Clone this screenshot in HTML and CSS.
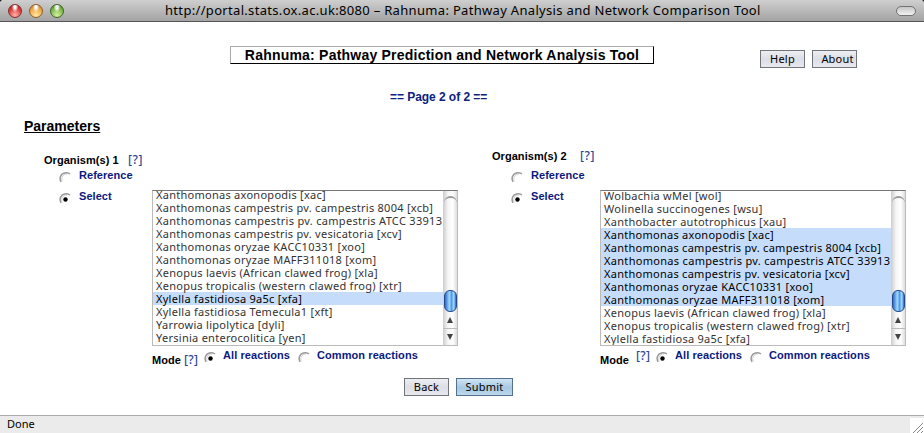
FILE: index.html
```
<!DOCTYPE html>
<html lang="en">
<head>
<meta charset="utf-8">
<title>Rahnuma: Pathway Analysis and Network Comparison Tool</title>
<link rel="stylesheet" href="styles.css">
</head>
<body>
<svg class="defs" width="0" height="0">
  <symbol id="radio" viewBox="0 0 12 12"><path d="M2 10.800C-.1 6.800 1.800 3 5.500 2c2.200-.6 4.200-.2 5.400 1" fill="none" stroke="#999" stroke-width="1.500"/><path d="M3.200 10.500C1.700 6.500 4.200 2.900 8 3.100" fill="none" stroke="#bbb" stroke-width=".7"/></symbol>
  <symbol id="radio-on" viewBox="0 0 12 12"><use href="#radio"/><circle cx="6.500" cy="7.500" r="2.200" fill="#000"/></symbol>
</svg>
<header class="titlebar">
  <div class="lights"><i class="light red"></i><i class="light amber"></i><i class="light green"></i></div>
  <div class="window-title">http://portal.stats.ox.ac.uk:8080 – Rahnuma: Pathway Analysis and Network Comparison Tool</div>
  <i class="pill"></i>
</header>
<main>
  <div class="top">
    <h1>Rahnuma: Pathway Prediction and Network Analysis Tool</h1>
    <button class="btn help">Help</button>
    <button class="btn about">About</button>
  </div>
  <p class="page">== Page 2 of 2 ==</p>
  <h2>Parameters</h2>
  <div class="groups">
    <section class="group first">
      <div class="heading"><b>Organism(s) 1</b><a>[?]</a></div>
      <div class="choices">
        <div class="options">
          <label class="opt"><svg class="radio"><use href="#radio"/></svg><span>Reference</span></label>
          <label class="opt"><svg class="radio"><use href="#radio-on"/></svg><span>Select</span></label>
        </div>
        <div class="listbox">
          <ul>
            <li>Xanthomonas axonopodis [xac]</li>
            <li>Xanthomonas campestris pv. campestris 8004 [xcb]</li>
            <li class="long">Xanthomonas campestris pv. campestris ATCC 33913</li>
            <li>Xanthomonas campestris pv. vesicatoria [xcv]</li>
            <li>Xanthomonas oryzae KACC10331 [xoo]</li>
            <li>Xanthomonas oryzae MAFF311018 [xom]</li>
            <li>Xenopus laevis (African clawed frog) [xla]</li>
            <li>Xenopus tropicalis (western clawed frog) [xtr]</li>
            <li class="sel">Xylella fastidiosa 9a5c [xfa]</li>
            <li>Xylella fastidiosa Temecula1 [xft]</li>
            <li>Yarrowia lipolytica [dyli]</li>
            <li>Yersinia enterocolitica [yen]</li>
          </ul>
          <div class="scroll"><i class="cap"></i><i class="thumb"></i><i class="arrow up"></i><i class="arrow down"></i></div>
        </div>
      </div>
      <div class="mode"><b>Mode</b><a>[?]</a><svg class="radio"><use href="#radio-on"/></svg><span class="all">All reactions</span><svg class="radio"><use href="#radio"/></svg><span>Common reactions</span></div>
    </section>
    <section class="group second">
      <div class="heading"><b>Organism(s) 2</b><a>[?]</a></div>
      <div class="choices">
        <div class="options">
          <label class="opt"><svg class="radio"><use href="#radio"/></svg><span>Reference</span></label>
          <label class="opt"><svg class="radio"><use href="#radio-on"/></svg><span>Select</span></label>
        </div>
        <div class="listbox">
          <ul>
            <li>Wolbachia wMel [wol]</li>
            <li>Wolinella succinogenes [wsu]</li>
            <li>Xanthobacter autotrophicus [xau]</li>
            <li class="sel">Xanthomonas axonopodis [xac]</li>
            <li class="sel">Xanthomonas campestris pv. campestris 8004 [xcb]</li>
            <li class="sel long">Xanthomonas campestris pv. campestris ATCC 33913</li>
            <li class="sel">Xanthomonas campestris pv. vesicatoria [xcv]</li>
            <li class="sel">Xanthomonas oryzae KACC10331 [xoo]</li>
            <li class="sel">Xanthomonas oryzae MAFF311018 [xom]</li>
            <li>Xenopus laevis (African clawed frog) [xla]</li>
            <li>Xenopus tropicalis (western clawed frog) [xtr]</li>
            <li>Xylella fastidiosa 9a5c [xfa]</li>
          </ul>
          <div class="scroll"><i class="cap"></i><i class="thumb"></i><i class="arrow up"></i><i class="arrow down"></i></div>
        </div>
      </div>
      <div class="mode"><b>Mode</b><a>[?]</a><svg class="radio"><use href="#radio-on"/></svg><span class="all">All reactions</span><svg class="radio"><use href="#radio"/></svg><span>Common reactions</span></div>
    </section>
  </div>
  <div class="actions"><button class="btn back">Back</button><button class="btn submit">Submit</button></div>
</main>
<footer><span>Done</span><svg class="grip" viewBox="0 0 14 15"><path d="M3 15 13 5M7 15l6-6M11 15l2-2" stroke="#888" fill="none"/></svg></footer>
</body>
</html>
```
FILE: styles.css
```
* { box-sizing: border-box; }
body {
  margin: 0;
  width: 924px;
  height: 433px;
  overflow: hidden;
  display: flex;
  flex-direction: column;
  background: #fff;
  color: #000;
  font-family: "Liberation Sans", sans-serif;
  font-size: 11px;
}
i { display: block; }
.defs { position: absolute; }

.titlebar {
  flex: none;
  height: 22px;
  display: flex;
  align-items: center;
  padding: 0 8px;
  background: linear-gradient(#cfcfcf, #a3a3a3);
  border-bottom: 1px solid #555;
  border-radius: 4px 4px 0 0;
  box-shadow: 0 -6px 0 6px #222;
}
.lights { display: flex; gap: 7px; width: 157px; }
.light {
  width: 14px;
  height: 14px;
  border-radius: 50%;
  border: 1px solid;
}
.red { background: radial-gradient(ellipse at 50% 15%, #fff 0 12%, transparent 38%), radial-gradient(circle at 50% 85%, #ffb4ac, #d83a38 60%, #9c2421); border-color: #83302d; }
.amber { background: radial-gradient(ellipse at 50% 15%, #fff 0 12%, transparent 38%), radial-gradient(circle at 50% 85%, #ffe9a2, #eda744 60%, #a96a22); border-color: #8d5e2c; }
.green { background: radial-gradient(ellipse at 50% 15%, #fff 0 12%, transparent 38%), radial-gradient(circle at 50% 85%, #d2f2a0, #7ab646 60%, #41762a); border-color: #3e6429; }
.window-title {
  flex: 1;
  font: 13px/19px "Noto Sans", sans-serif;
  letter-spacing: .32px;
  margin-top: -1px;
  white-space: nowrap;
}
.pill {
  width: 20px;
  height: 10px;
  border: 1px solid #737373;
  border-radius: 5px;
  background: linear-gradient(#c4c4c4, #f2f2f2);
}

main { flex: 1; min-height: 0; }
.top { display: flex; padding: 24px 0 0 230px; height: 47px; }
h1 {
  width: 424px;
  height: 18px;
  margin: 0 106px 0 0;
  border: 1px solid #000;
  border-top-color: #aaa;
  border-left-color: #aaa;
  font-size: 14px;
  line-height: 16px;
  letter-spacing: .22px;
  text-align: center;
  white-space: nowrap;
}
.btn {
  height: 18px;
  padding: 0 0 1px;
  border: 1px solid #72757c;
  border-radius: 0;
  background: linear-gradient(#eceef2, #dcdee6 50%, #e8e8ee);
  color: #000;
  font: 11px/14px "Noto Sans", sans-serif;
  letter-spacing: .2px;
  white-space: nowrap;
}
.help, .about { width: 45px; margin-top: 4px; }
.help { margin-right: 7px; }
.about { padding-left: 6px; }
.page {
  margin: 21px 0 0 390px;
  font-size: 12px;
  line-height: 14px;
  letter-spacing: -.05px;
  font-weight: bold;
  color: #0c2180;
}
h2 {
  margin: 14px 0 0 24px;
  font-size: 14px;
  line-height: 16px;
  text-decoration: underline;
}

.groups { display: flex; padding-left: 44px; height: 244px; }
.group { flex: none; width: 448px; padding-top: 15px; }
.heading { height: 21px; display: flex; line-height: 14px; padding-top: 4px; letter-spacing: .05px; }
.heading b { width: 84px; }
.second .heading { padding-top: 0; }
.second .heading b { width: 88px; }
a { color: #1f4a98; font: 500 12px/13px "Noto Sans", sans-serif; letter-spacing: .6px; }
.choices { display: flex; height: 176px; }
.options { width: 108px; padding-left: 15px; }
.second .options { padding-left: 19px; }
.opt { display: flex; height: 21px; line-height: 12px; font-weight: bold; color: #0c1a80; margin-top: -1px; letter-spacing: .05px; }
.opt + .opt { margin-top: 0; }
.opt span { margin-left: 8px; }
.opt .radio { margin-top: 2px; }
.radio { width: 12px; height: 12px; flex: none; }
.listbox {
  width: 306px;
  height: 156px;
  margin-top: 20px;
  display: flex;
  overflow: hidden;
  border: 1px solid #bbb;
  border-top-color: #777;
}
ul {
  width: 290px;
  height: 159px;
  flex: none;
  margin: -3px 0 0;
  padding: 0;
  overflow: hidden;
  list-style: none;
}
.second ul { margin-top: -2px; }
li {
  height: 13px;
  padding-left: 3px;
  font: 11px/13px "Noto Sans", sans-serif;
  letter-spacing: .27px;
  white-space: nowrap;
  color: #333;
}
.long { letter-spacing: .31px; }
.sel { background: #c5dcfa; color: #000; }
.scroll {
  width: 14px;
  display: flex;
  flex-direction: column;
  align-items: center;
  background: linear-gradient(90deg, #ccc, #f5f5f5 35%, #fff 70%, #ddd);
}
.cap { width: 13px; height: 9px; margin-top: 5px; border-top: 2px solid #999; border-radius: 7px 7px 0 0; }
.thumb {
  width: 13px;
  height: 22px;
  margin-top: 85px;
  border: 1px solid #234a90;
  border-radius: 6px;
  background: linear-gradient(90deg, #296cc8, #a3d6ff 40%, #4b9bea 60%, #a9dcff 80%, #2867bb);
}
.arrow { width: 14px; height: 16px; padding-top: 5px; }
.arrow::before { content: ""; display: block; width: 0; margin: auto; border: 3px solid transparent; }
.up::before { border-bottom: 6px solid #444; border-top: 0; }
.down { border-top: 1px solid #bbb; }
.down::before { border-top: 6px solid #444; border-bottom: 0; }
.mode { display: flex; align-items: flex-start; padding-left: 108px; line-height: 12px; font-weight: bold; color: #0c1a80; letter-spacing: .08px; }
.mode b { color: #000; width: 32px; padding-top: 8px; }
.mode a { width: 20px; margin-top: 7px; letter-spacing: .4px; }
.mode .radio { margin: 5px 7px 0 0; }
.mode span { padding-top: 3px; }
.mode .all { width: 75px; }
.second .mode b { width: 36px; }
.second .mode a { margin-top: 3px; width: 20px; }

.actions { display: flex; gap: 7px; padding-left: 404px; }
.back { width: 45px; }
.submit { width: 57px; border-color: #53708f; background: linear-gradient(#cfe4f4, #a6c8e1 55%, #bcd9ec); }
footer {
  flex: none;
  height: 18px;
  display: flex;
  justify-content: space-between;
  border-top: 1px solid #aaa;
  background: #ebebeb;
  font: 11px/16px "Noto Sans", sans-serif;
}
footer span { padding-left: 7px; }
.grip { width: 14px; height: 15px; margin-top: 2px; background: #fff; }
```
